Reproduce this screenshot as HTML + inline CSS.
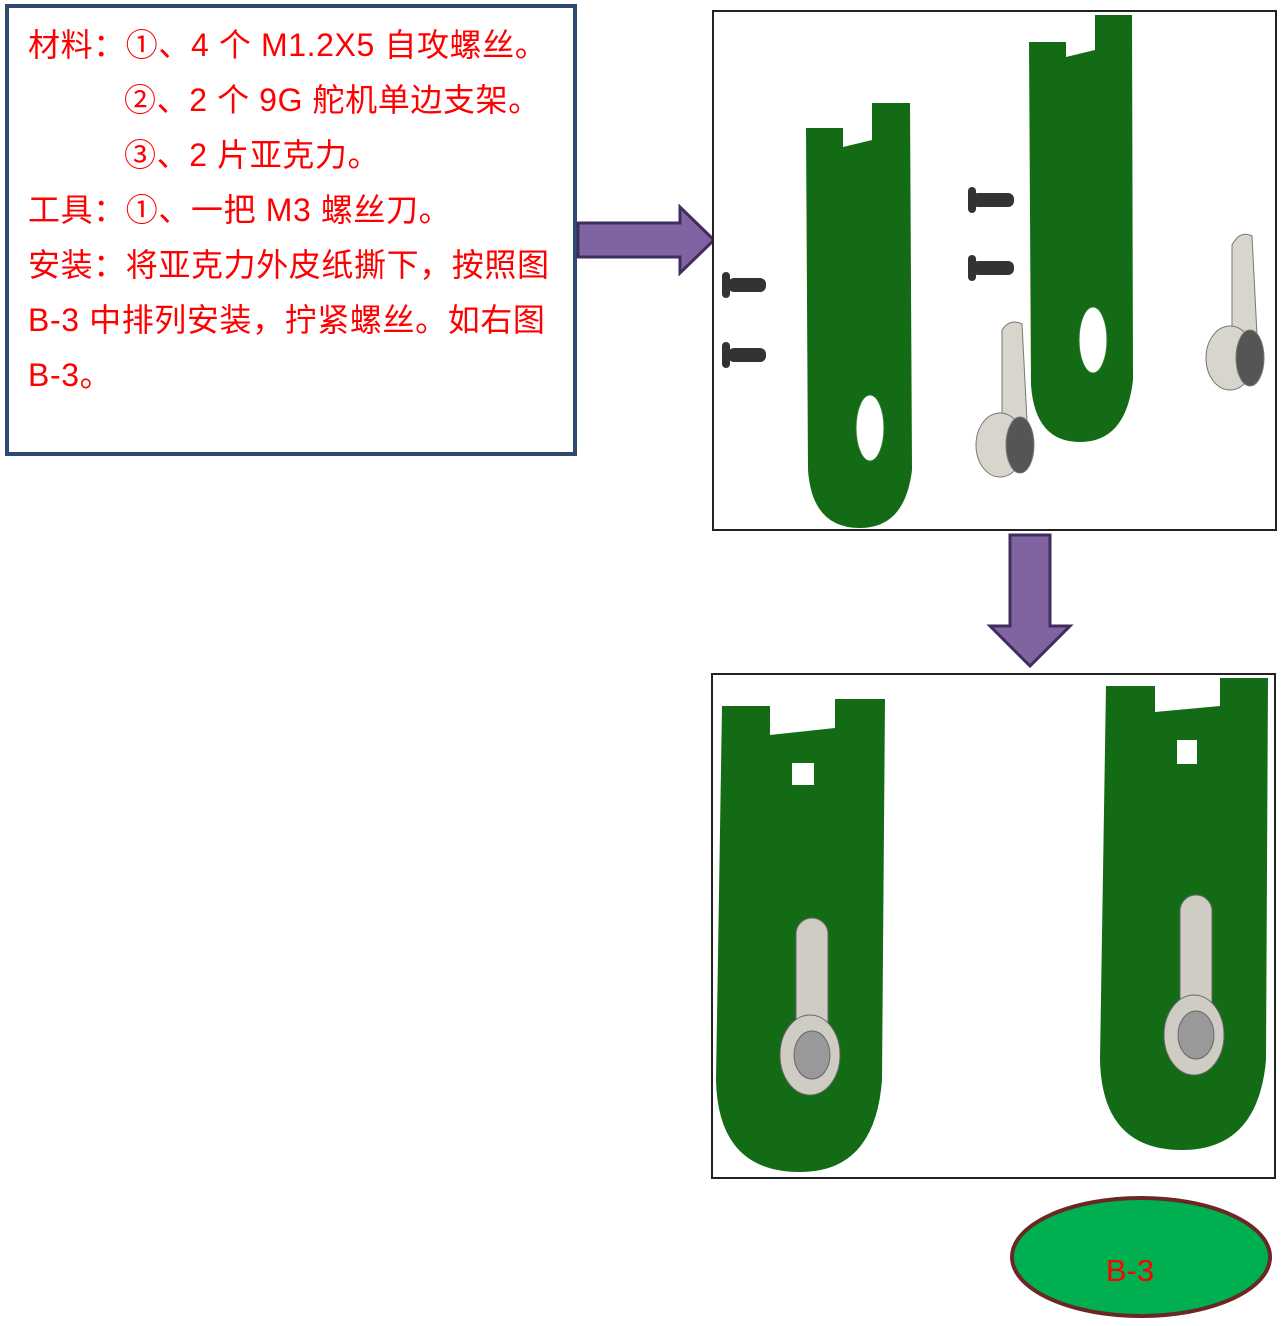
<!DOCTYPE html>
<html><head><meta charset="utf-8"><style>
html,body{margin:0;padding:0;background:#fff;}
body{width:1281px;height:1326px;position:relative;overflow:hidden;font-family:"Liberation Sans","Noto Sans CJK SC",sans-serif;}
.box{position:absolute;left:5px;top:4px;width:564px;height:444px;border:4px solid #2e4a6e;background:#fff;}
.t{position:absolute;color:#f00;font-size:32px;letter-spacing:0.6px;line-height:36px;white-space:pre;left:28px;}
</style></head><body>
<div class="box"></div>
<div class="t" style="top:27px">材料：①、4 个 M1.2X5 自攻螺丝。</div>
<div class="t" style="top:82px;left:124px">②、2 个 9G 舵机单边支架。</div>
<div class="t" style="top:137px;left:124px">③、2 片亚克力。</div>
<div class="t" style="top:192px">工具：①、一把 M3 螺丝刀。</div>
<div class="t" style="top:247px">安装：将亚克力外皮纸撕下，按照图</div>
<div class="t" style="top:302px">B-3 中排列安装，拧紧螺丝。如右图</div>
<div class="t" style="top:357px">B-3。</div>
<svg width="1281" height="1326" style="position:absolute;left:0;top:0">
<polygon points="578,223 680,223 680,207 714,240 680,273 680,257 578,257" fill="#8064a2" stroke="#3f2d5e" stroke-width="3"/>
<polygon points="1010,535 1050,535 1050,626 1070,626 1030,666 990,626 1010,626" fill="#8064a2" stroke="#3f2d5e" stroke-width="3"/>
<rect x="713" y="11" width="563" height="519" fill="#fff" stroke="#222" stroke-width="2"/>
<g fill="#136b16">
<path d="M806,128 L843,128 L843,147 L872,140 L872,103 L910,103 L912,470 Q905,528 860,528 Q812,528 808,470 Z"/>
<path d="M1029,42 L1066,42 L1066,57 L1095,50 L1095,15 L1132,15 L1133,380 Q1126,442 1080,442 Q1035,442 1031,385 Z"/>
</g>
<ellipse cx="870" cy="428" rx="14" ry="33" fill="#fff" stroke="#2a7a2a"/>
<ellipse cx="1093" cy="340" rx="14" ry="33" fill="#fff" stroke="#2a7a2a"/>
<g fill="#333"><rect x="728" y="278" width="38" height="14" rx="6"/><rect x="728" y="348" width="38" height="14" rx="6"/><rect x="972" y="193" width="42" height="14" rx="6"/><rect x="972" y="261" width="42" height="14" rx="6"/>
<rect x="722" y="272" width="8" height="26" rx="4"/><rect x="722" y="342" width="8" height="26" rx="4"/><rect x="968" y="187" width="8" height="26" rx="4"/><rect x="968" y="255" width="8" height="26" rx="4"/></g>
<g fill="#d8d6cc" stroke="#777">
<path d="M1002,330 Q1010,318 1022,324 L1028,440 L1002,440 Z"/>
<ellipse cx="1000" cy="445" rx="24" ry="32"/>
<ellipse cx="1020" cy="445" rx="14" ry="28" fill="#555"/>
<path d="M1232,245 Q1240,230 1252,236 L1258,355 L1232,355 Z"/>
<ellipse cx="1230" cy="358" rx="24" ry="32"/>
<ellipse cx="1250" cy="358" rx="14" ry="28" fill="#555"/>
</g>
<rect x="712" y="674" width="563" height="504" fill="#fff" stroke="#222" stroke-width="2"/>
<g fill="#136b16">
<path d="M722,706 L770,706 L770,735 L835,728 L835,699 L885,699 L882,1080 Q875,1172 800,1172 Q718,1172 716,1080 Z"/>
<path d="M1106,686 L1155,686 L1155,712 L1220,706 L1220,678 L1268,678 L1266,1060 Q1258,1150 1182,1150 Q1102,1150 1100,1060 Z"/>
</g>
<rect x="792" y="763" width="22" height="22" fill="#fff"/>
<rect x="1177" y="740" width="20" height="24" fill="#fff"/>
<g fill="#cfcdc3" stroke="#666">
<rect x="796" y="918" width="32" height="150" rx="16"/>
<ellipse cx="810" cy="1055" rx="30" ry="40"/>
<ellipse cx="812" cy="1055" rx="18" ry="24" fill="#999"/>
<rect x="1180" y="895" width="32" height="150" rx="16"/>
<ellipse cx="1194" cy="1035" rx="30" ry="40"/>
<ellipse cx="1196" cy="1035" rx="18" ry="24" fill="#999"/>
</g>
<ellipse cx="1141" cy="1257" rx="129" ry="59" fill="#00b050" stroke="#6b2626" stroke-width="4"/>
<text x="1130" y="1281" font-size="31" fill="#f00" text-anchor="middle" font-family="Liberation Sans, sans-serif">B-3</text>
</svg>
</body></html>
